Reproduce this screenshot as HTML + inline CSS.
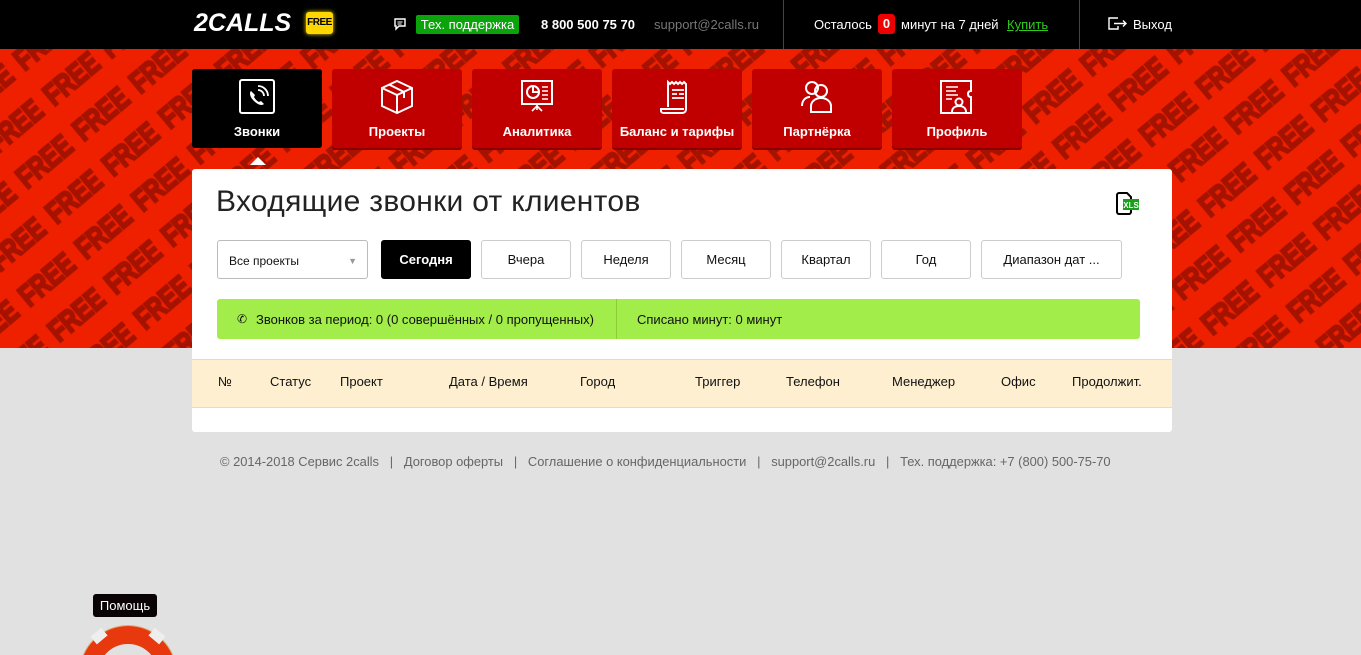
<!DOCTYPE html>
<html><head><meta charset="utf-8"><style>
*{margin:0;padding:0;box-sizing:border-box}
html,body{width:1361px;height:655px;overflow:hidden}
body{background:#e1e1e1;font-family:"Liberation Sans",sans-serif;position:relative}
.top{position:absolute;left:0;top:0;width:1361px;height:49px;background:#000;color:#fff;font-size:13px}
.top .a{position:absolute;top:17px}
.hero{position:absolute;left:0;top:49px;width:1361px;height:299px;background:#ee2000;overflow:hidden}
.tile{position:absolute;top:69px;width:130px;height:79px;background:#c00000;border-radius:3px;box-shadow:0 2px 0 #8a0000;color:#fff;font-size:13px;font-weight:bold;text-align:center}
.tile span{position:absolute;left:0;right:0;top:55px}
.tile svg{position:absolute;left:47px;top:10px}
.card{position:absolute;left:192px;top:169px;width:980px;height:263px;background:#fff;border-radius:3px}
.btn{position:absolute;top:71px;height:39px;border:1px solid #ccc;border-radius:3px;font-size:13px;text-align:center;line-height:37px;color:#111}
.th{position:absolute;top:205px;font-size:13px;color:#111}
</style></head><body>
<div class="top">
<div style="position:absolute;left:194px;top:9px;font-size:25px;font-weight:900;font-style:italic;letter-spacing:0px">2CALLS</div>
<div style="position:absolute;left:306px;top:12px;width:27px;height:22px;background:#ffd600;border-radius:3px;color:#000;font-size:10px;font-weight:bold;text-align:center;line-height:22px;box-shadow:0 0 4px #ffe000;letter-spacing:-0.5px">FREE</div>
<svg style="position:absolute;left:393px;top:17px" width="14" height="14" viewBox="0 0 14 14"><path d="M2 2h10v7H6l-3 3V9H2z" fill="none" stroke="#fff" stroke-width="1.4"/><path d="M4.5 5h5M4.5 7h4" stroke="#fff"/></svg>
<div style="position:absolute;left:416px;top:15px;width:103px;height:19px;background:#0aa30a;border-radius:2px;font-size:13px;text-align:center;line-height:19px">Тех. поддержка</div>
<div class="a" style="left:541px;font-weight:bold">8 800 500 75 70</div>
<div class="a" style="left:654px;color:#777">support@2calls.ru</div>
<div style="position:absolute;left:783px;top:0;width:1px;height:49px;background:#444"></div>
<div class="a" style="left:814px">Осталось</div>
<div style="position:absolute;left:878px;top:14px;width:17px;height:20px;background:#e00;border-radius:3px;text-align:center;line-height:20px;font-weight:bold">0</div>
<div class="a" style="left:901px">минут на 7 дней</div>
<div class="a" style="left:1007px;color:#2ecc1a;text-decoration:underline">Купить</div>
<div style="position:absolute;left:1079px;top:0;width:1px;height:49px;background:#444"></div>
<svg style="position:absolute;left:1108px;top:17px" width="20" height="13" viewBox="0 0 20 13"><path d="M10 1H1v11h9V9" fill="none" stroke="#fff" stroke-width="1.4"/><path d="M6 6.5h12M15 3.5l3 3-3 3" fill="none" stroke="#fff" stroke-width="1.4"/></svg>
<div class="a" style="left:1133px">Выход</div>
</div>
<div class="hero">
<svg width="1361" height="299" style="position:absolute;left:0;top:0">
<defs><pattern id="p" width="74" height="46" patternUnits="userSpaceOnUse" patternTransform="rotate(-40)">
<g transform="scale(0.7,1)"><text x="6" y="33" font-family="Liberation Sans" font-weight="bold" font-size="31" fill="#a51300" stroke="#a51300" stroke-width="2.5" textLength="90" lengthAdjust="spacingAndGlyphs">FREE</text></g>
</pattern></defs>
<rect width="1361" height="299" fill="url(#p)"/>
</svg>
</div>
<div class="tile" style="left:192px;background:#000;box-shadow:none">
<svg width="36" height="36" viewBox="0 0 36 36"><rect x="1" y="1" width="34" height="33" rx="2" fill="none" stroke="#fff" stroke-width="2"/><path d="M12 12c-2 2-1 6 3 10s8 5 10 3l-3-3-2 1c-2-1-4-3-5-5l1-2z" fill="#fff"/><path d="M19 11a6 6 0 0 1 6 6M19 7a10 10 0 0 1 10 10" fill="none" stroke="#fff" stroke-width="1.8"/></svg>
<span>Звонки</span></div>
<div style="position:absolute;left:250px;top:157px;width:0;height:0;border:8px solid transparent;border-bottom-color:#fff;border-top:0"></div>
<div class="tile" style="left:332px"><svg width="36" height="36" viewBox="0 0 36 36"><path d="M18 2 33 9v18L18 34 3 27V9z M3 9l15 7 15-7M18 16v18M10 5.5l15 7.5v6" fill="none" stroke="#fff" stroke-width="2"/></svg><span>Проекты</span></div>
<div class="tile" style="left:472px"><svg width="36" height="36" viewBox="0 0 36 36"><rect x="3" y="2" width="30" height="23" fill="none" stroke="#fff" stroke-width="2"/><circle cx="14" cy="13" r="6" fill="none" stroke="#fff" stroke-width="2"/><path d="M14 7v6h6" fill="none" stroke="#fff" stroke-width="2"/><path d="M23 8h6M23 12h6M23 16h6M23 20h6M18 25v6M18 27l-5 5M18 27l5 5" stroke="#fff" stroke-width="1.6"/></svg><span>Аналитика</span></div>
<div class="tile" style="left:612px"><svg width="36" height="36" viewBox="0 0 36 36"><path d="M9 28V3l2 2 2-2 2 2 2-2 2 2 2-2 2 2 2-2 2 2v25c0 3-2 4-4 4H5c-2 0-3-1-3-2v-2h23" fill="none" stroke="#fff" stroke-width="2"/><path d="M13 11h12M13 15h5M20 15h5M13 19h12" stroke="#fff" stroke-width="1.8"/></svg><span>Баланс и тарифы</span></div>
<div class="tile" style="left:752px"><svg width="36" height="36" viewBox="0 0 36 36"><circle cx="13" cy="9" r="6" fill="none" stroke="#fff" stroke-width="2"/><circle cx="22" cy="12" r="6" fill="none" stroke="#fff" stroke-width="2"/><path d="M3 27c0-5 3-9 8-9M12 33v-6c0-4 4-8 10-8s10 4 10 8v6z" fill="none" stroke="#fff" stroke-width="2"/></svg><span>Партнёрка</span></div>
<div class="tile" style="left:892px"><svg width="36" height="36" viewBox="0 0 36 36"><path d="M2 2h30v10c-2 0-3 1-3 3s1 3 3 3v16H2z" fill="none" stroke="#fff" stroke-width="2"/><path d="M7 8h12M7 12h10M7 16h12M7 20h6" stroke="#fff" stroke-width="1.6"/><circle cx="20" cy="23" r="3.5" fill="none" stroke="#fff" stroke-width="2"/><path d="M13 33c0-4 3-6 7-6s7 2 7 6" fill="none" stroke="#fff" stroke-width="2"/></svg><span>Профиль</span></div>
<div class="card">
<div style="position:absolute;left:24px;top:16px;font-size:30px;color:#222;font-weight:300;letter-spacing:0.3px">Входящие звонки от клиентов</div>
<svg style="position:absolute;left:924px;top:23px" width="24" height="23" viewBox="0 0 24 23"><path d="M1 3c0-1 1-2 2-2h8l4 4v15c0 1-1 2-2 2H3c-1 0-2-1-2-2z" fill="#fff" stroke="#000" stroke-width="2"/><rect x="7" y="7" width="16" height="11" fill="#1a9f1a"/><text x="15" y="16" font-size="8" font-weight="bold" fill="#fff" text-anchor="middle" font-family="Liberation Sans">XLS</text></svg>
<div class="btn" style="left:25px;width:151px;text-align:left;padding-left:11px;line-height:40px;font-size:12px;border-color:#bbb">Все проекты<span style="position:absolute;right:10px;color:#999;font-size:9px">▼</span></div>
<div class="btn" style="left:189px;width:90px;background:#000;color:#fff;border-color:#000;font-weight:bold">Сегодня</div>
<div class="btn" style="left:289px;width:90px">Вчера</div>
<div class="btn" style="left:389px;width:90px">Неделя</div>
<div class="btn" style="left:489px;width:90px">Месяц</div>
<div class="btn" style="left:589px;width:90px">Квартал</div>
<div class="btn" style="left:689px;width:90px">Год</div>
<div class="btn" style="left:789px;width:141px">Диапазон дат ...</div>
<div style="position:absolute;left:25px;top:130px;width:923px;height:40px;background:#a3ed4a;border-radius:3px;font-size:13px;color:#111">
<span style="position:absolute;left:20px;top:13px;font-size:12px">✆</span>
<span style="position:absolute;left:39px;top:13px">Звонков за период: 0 (0 совершённых / 0 пропущенных)</span>
<div style="position:absolute;left:399px;top:0;width:1px;height:40px;background:#8ccc3a"></div>
<span style="position:absolute;left:420px;top:13px">Списано минут: 0 минут</span></div>
<div style="position:absolute;left:0;top:190px;width:980px;height:49px;background:#fdefd0;border-top:1px solid #ead9b5;border-bottom:1px solid #e5dcc8"></div>
<div class="th" style="left:26px">№</div><div class="th" style="left:78px">Статус</div><div class="th" style="left:148px">Проект</div><div class="th" style="left:257px">Дата / Время</div><div class="th" style="left:388px">Город</div><div class="th" style="left:503px">Триггер</div><div class="th" style="left:594px">Телефон</div><div class="th" style="left:700px">Менеджер</div><div class="th" style="left:809px">Офис</div><div class="th" style="left:880px">Продолжит.</div>
</div>
<div style="position:absolute;left:220px;top:454px;font-size:12.9px;color:#666;white-space:pre;letter-spacing:0px">© 2014-2018 Сервис 2calls   |   Договор оферты   |   Соглашение о конфиденциальности   |   support@2calls.ru   |   Тех. поддержка: +7 (800) 500-75-70</div>
<div style="position:absolute;left:93px;top:594px;width:64px;height:23px;background:#0a0306;border-radius:3px;color:#fff;font-size:13px;text-align:center;line-height:23px">Помощь</div>
<div style="position:absolute;left:70px;top:620px;width:120px;height:35px;overflow:hidden">
<div style="position:absolute;left:10px;top:6px;width:96px;height:96px;border-radius:50%;border:18px solid #e8380e;box-shadow:0 0 0 1px #d9b070"></div>
<div style="position:absolute;left:22px;top:11px;width:14px;height:10px;background:#eee;transform:rotate(-40deg)"></div>
<div style="position:absolute;left:80px;top:11px;width:14px;height:10px;background:#eee;transform:rotate(40deg)"></div>
</div>
</body></html>
